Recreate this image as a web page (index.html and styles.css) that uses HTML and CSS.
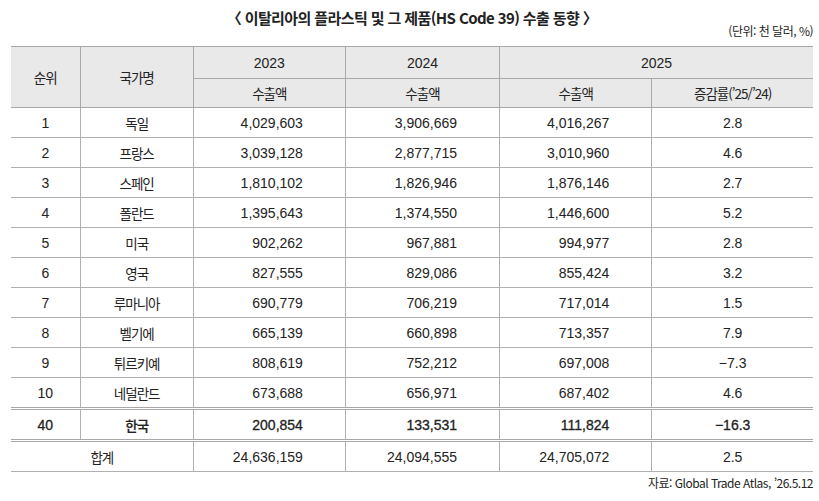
FILE: index.html
```html
<!DOCTYPE html>
<html lang="ko">
<head>
<meta charset="utf-8">
<title>이탈리아의 플라스틱 및 그 제품 수출 동향</title>
<link rel="stylesheet" href="styles.css">
</head>
<body>
<div class="page">
  <h1 class="title">〈 이탈리아의 플라스틱 및 그 제품(HS Code 39) 수출 동향 〉</h1>
  <p class="unit">(단위: 천 달러, %)</p>
  <table class="data">
    <colgroup>
      <col class="c-rank"><col class="c-name"><col class="c-num"><col class="c-num2"><col class="c-num"><col class="c-rate">
    </colgroup>
    <thead>
      <tr class="h1">
        <th rowspan="2" class="k">순위</th>
        <th rowspan="2" class="k">국가명</th>
        <th>2023</th>
        <th>2024</th>
        <th colspan="2">2025</th>
      </tr>
      <tr class="h2">
        <th class="k">수출액</th>
        <th class="k">수출액</th>
        <th class="k">수출액</th>
        <th class="k">증감률(’25/’24)</th>
      </tr>
    </thead>
    <tbody>
      <tr><td>1</td><td class="k">독일</td><td class="n">4,029,603</td><td class="n">3,906,669</td><td class="n">4,016,267</td><td>2.8</td></tr>
      <tr><td>2</td><td class="k">프랑스</td><td class="n">3,039,128</td><td class="n">2,877,715</td><td class="n">3,010,960</td><td>4.6</td></tr>
      <tr><td>3</td><td class="k">스페인</td><td class="n">1,810,102</td><td class="n">1,826,946</td><td class="n">1,876,146</td><td>2.7</td></tr>
      <tr><td>4</td><td class="k">폴란드</td><td class="n">1,395,643</td><td class="n">1,374,550</td><td class="n">1,446,600</td><td>5.2</td></tr>
      <tr><td>5</td><td class="k">미국</td><td class="n">902,262</td><td class="n">967,881</td><td class="n">994,977</td><td>2.8</td></tr>
      <tr><td>6</td><td class="k">영국</td><td class="n">827,555</td><td class="n">829,086</td><td class="n">855,424</td><td>3.2</td></tr>
      <tr><td>7</td><td class="k">루마니아</td><td class="n">690,779</td><td class="n">706,219</td><td class="n">717,014</td><td>1.5</td></tr>
      <tr><td>8</td><td class="k">벨기에</td><td class="n">665,139</td><td class="n">660,898</td><td class="n">713,357</td><td>7.9</td></tr>
      <tr><td>9</td><td class="k">튀르키예</td><td class="n">808,619</td><td class="n">752,212</td><td class="n">697,008</td><td>−7.3</td></tr>
      <tr><td>10</td><td class="k">네덜란드</td><td class="n">673,688</td><td class="n">656,971</td><td class="n">687,402</td><td>4.6</td></tr>
      <tr class="korea"><td>40</td><td class="k">한국</td><td class="n">200,854</td><td class="n">133,531</td><td class="n">111,824</td><td>−16.3</td></tr>
      <tr class="total"><td colspan="2" class="k">합계</td><td class="n">24,636,159</td><td class="n">24,094,555</td><td class="n">24,705,072</td><td>2.5</td></tr>
    </tbody>
  </table>
  <p class="source">자료: Global Trade Atlas, ’26.5.12</p>
</div>
</body>
</html>
```

FILE: styles.css
```css
html, body {
  margin: 0;
  padding: 0;
  background: #ffffff;
}

.page {
  width: 802px;
  padding: 0 6px 0 11px;
  color: #222222;
  font-family: "Liberation Sans", "Noto Sans CJK KR", sans-serif;
}

.title {
  margin: 0;
  padding-top: 9px;
  font-size: 15px;
  line-height: 18px;
  font-weight: 700;
  text-align: center;
  letter-spacing: -0.6px;
  font-family: "Noto Sans CJK KR", "Liberation Sans", sans-serif;
}

.unit {
  margin: -3px 0 0 0;
  font-size: 12px;
  line-height: 14px;
  text-align: right;
  letter-spacing: -0.5px;
  font-family: "Noto Sans CJK KR", sans-serif;
}

.data {
  margin-top: 8px;
  width: 802px;
  border-collapse: collapse;
  table-layout: fixed;
  font-size: 14px;
  border-top: 1px solid #a8a8a8;
}

.c-rank { width: 69px; }
.c-name { width: 113px; }
.c-num { width: 152px; }
.c-num2 { width: 154px; }
.c-rate { width: 161px; }

.data th,
.data td {
  border: 1px solid #b0b0b0;
  padding: 0;
  text-align: center;
  line-height: 16px;
  font-weight: 400;
}

.data tr > :first-child { border-left: none; }
.data tr > :last-child { border-right: none; }

.data thead th {
  background: #e9e9e9;
  border-color: #a8a8a8;
}

.h1 th { height: 31px; }
.h2 th { height: 28px; }

.data tbody td { height: 29px; }

.k {
  font-family: "Noto Sans CJK KR", sans-serif;
  font-size: 13.5px;
  letter-spacing: -1px;
}

.data td.n {
  text-align: right;
  padding-right: 42px;
}

.korea td {
  border-top: 3px double #a8a8a8;
  height: 26px;
  -webkit-text-stroke: 0.3px #222222;
}

.korea td.k {
  font-weight: 500;
  -webkit-text-stroke: 0.2px #222222;
}

.total td {
  border-top: 3px double #a8a8a8;
  height: 28px;
}

.source {
  margin: 4px 0 0 0;
  font-size: 12px;
  line-height: 14px;
  text-align: right;
  letter-spacing: -0.5px;
  font-family: "Noto Sans CJK KR", "Liberation Sans", sans-serif;
}
```
